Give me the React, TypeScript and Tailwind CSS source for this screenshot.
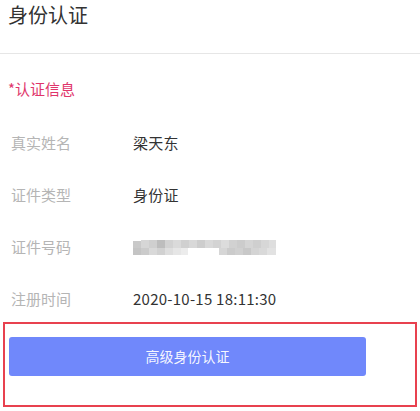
import React from "react";

const rows = [
  { label: "真实姓名", value: "梁天东" },
  { label: "证件类型", value: "身份证" },
  { label: "证件号码", value: null },
  { label: "注册时间", value: "2020-10-15 18:11:30" },
];

// mosaic blocks for the masked ID number: [x, y, w, h, color]
const blocks: [number, number, number, number, string][] = [
  [0, 1, 8, 8, "#c9c9c9"], [8, 0, 8, 8, "#d6d6d6"], [16, 0, 8, 8, "#cfcfcf"],
  [24, 0, 8, 8, "#bdbdbd"], [32, 0, 8, 8, "#d2d2d2"], [40, 0, 8, 8, "#dadada"],
  [48, 0, 8, 8, "#d0d0d0"], [56, 0, 8, 8, "#d8d8d8"], [64, 0, 8, 8, "#cdcdcd"],
  [72, 0, 8, 8, "#d9d9d9"], [80, 0, 8, 8, "#d3d3d3"], [88, 0, 8, 8, "#dcdcdc"],
  [96, 0, 8, 8, "#d1d1d1"], [104, 0, 8, 8, "#cccccc"], [112, 0, 8, 8, "#d5d5d5"],
  [120, 0, 8, 8, "#cfcfcf"], [128, 0, 8, 8, "#d7d7d7"], [136, 0, 7, 8, "#dedede"],
  [0, 8, 8, 7, "#c4c4c4"], [8, 8, 8, 7, "#cbcbcb"], [16, 8, 8, 7, "#d9d9d9"],
  [24, 8, 8, 7, "#d1d1d1"], [32, 8, 8, 7, "#dedede"], [40, 8, 8, 7, "#e6e6e6"],
  [48, 8, 7, 7, "#ececec"], [86, 8, 8, 7, "#d6d6d6"], [94, 8, 8, 7, "#cbcbcb"],
  [102, 8, 8, 7, "#d0d0d0"], [110, 8, 8, 7, "#c8c8c8"], [118, 8, 8, 7, "#d4d4d4"],
  [126, 8, 8, 7, "#d9d9d9"], [134, 8, 9, 7, "#e2e2e2"],
];

function Masked() {
  return (
    <svg width="143" height="15" viewBox="0 0 143 15" className="block">
      {blocks.map(([x, y, w, h, c], i) => (
        <rect key={i} x={x} y={y} width={w} height={h} fill={c} />
      ))}
    </svg>
  );
}

export default function App() {
  return (
    <div
      className="w-[420px] h-[411px] bg-white overflow-hidden"
      style={{ fontFamily: '"Noto Sans CJK SC", "Noto Sans", sans-serif' }}
    >
      <div className="h-[54px] border-b border-[#e6e6e6] pl-[8px]">
        <h1 className="text-[20px] leading-[30px] text-[#333]">身份认证</h1>
      </div>

      <div className="mt-[25px] pl-[8px] text-[15px] leading-[20px] text-[#e0356b]">
        *认证信息
      </div>

      <div className="mt-[33px] flex flex-col gap-[30px]">
        {rows.map((r) => (
          <div key={r.label} className="flex items-center h-[22px] text-[15px]">
            <span className="w-[133px] pl-[11px] text-[#b5b5b5]">{r.label}</span>
            {r.value ? (
              <span className="text-[#333] tracking-[0.25px]">{r.value}</span>
            ) : (
              <Masked />
            )}
          </div>
        ))}
      </div>

      <div className="mt-[12px] mx-[3px] w-[414px] h-[85px] border-2 border-[#e8414f] pt-[13px] pl-[4px]">
        <button className="w-[357px] h-[39px] rounded-[3px] bg-[#7088fb] text-white/95 text-[14px]">
          高级身份认证
        </button>
      </div>
    </div>
  );
}
